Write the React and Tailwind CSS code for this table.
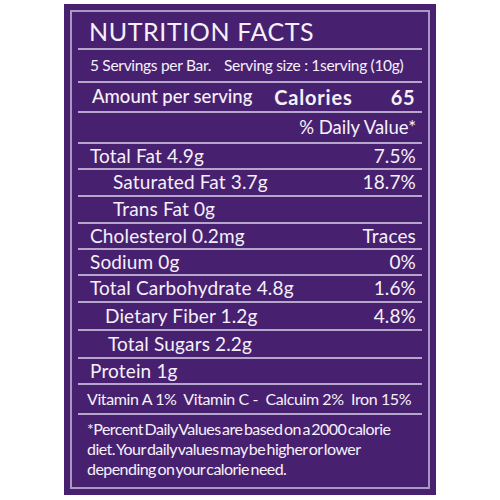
import React from "react";

const line = "border-b-2 border-[#b6a6cc]";

function Row({ h, left, right, indent = "pl-[12px]", extra = "" }) {
  return (
    <div className={`${h} ${line} flex items-center justify-between pr-[6px] ${indent} ${extra}`}>
      <span>{left}</span>
      {right ? <span>{right}</span> : null}
    </div>
  );
}

export default function App() {
  return (
    <div className="w-[500px] h-[500px] bg-white pt-[4px] pl-[64px]" style={{ fontFamily: "Lato, 'Noto Sans', sans-serif" }}>
      <div className="w-[372px] h-[491px] bg-[#47216f] p-[6px] text-[#f6f0fb]">
        <div className="h-full border-2 border-[#a999c2] px-[6px]">
          <div className={`h-[38px] ${line} flex items-center pl-[11px] text-[25px] tracking-[0.6px] leading-none pt-[2px]`}>
            NUTRITION FACTS
          </div>
          <div className={`h-[33px] ${line} flex items-center pl-[12px] text-[15.5px] tracking-[-0.3px]`}>
            <span>5 Servings per Bar.</span>
            <span className="ml-[13px]">Serving size : 1serving (10g)</span>
          </div>
          <div className={`h-[30px] ${line} flex items-center pl-[14px] pr-[7px] text-[18.5px]`}>
            <span className="font-medium">Amount per serving</span>
            <span className="ml-[22px] font-bold text-[20px] tracking-[0.8px]">Calories</span>
            <span className="ml-auto font-bold text-[20px] tracking-[0.5px]">65</span>
          </div>
          <div className={`h-[31px] ${line} flex items-center justify-end pr-[6px] text-[18.5px]`}>
            % Daily Value*
          </div>
          <div className="text-[19px] tracking-[0.15px]">
            <Row h="h-[26px]" left="Total Fat 4.9g" right="7.5%" />
            <Row h="h-[27px]" left="Saturated Fat 3.7g" right="18.7%" indent="pl-[35px]" />
            <Row h="h-[27px]" left="Trans Fat 0g" indent="pl-[35px]" />
            <Row h="h-[26px]" left="Cholesterol 0.2mg" right="Traces" />
            <Row h="h-[26px]" left="Sodium 0g" right="0%" />
            <Row h="h-[27px]" left="Total Carbohydrate 4.8g" right="1.6%" />
            <Row h="h-[28px]" left="Dietary Fiber 1.2g" right="4.8%" indent="pl-[27px]" />
            <Row h="h-[28px]" left="Total Sugars 2.2g" indent="pl-[30px]" />
            <Row h="h-[26px]" left="Protein 1g" />
          </div>
          <div className={`h-[30px] ${line} flex items-center pl-[9px] text-[16px] tracking-[-0.4px] whitespace-pre`}>
            Vitamin A 1%  Vitamin C -  Calcuim 2%  Iron 15%
          </div>
          <div className="pl-[9px] pt-[4px] text-[16px] leading-[20px] tracking-[-0.55px] [word-spacing:-2px]">
            <div>*Percent Daily Values are based on a 2000 calorie</div>
            <div>diet. Your daily values may be higher or lower</div>
            <div>depending on your calorie need.</div>
          </div>
        </div>
      </div>
    </div>
  );
}
